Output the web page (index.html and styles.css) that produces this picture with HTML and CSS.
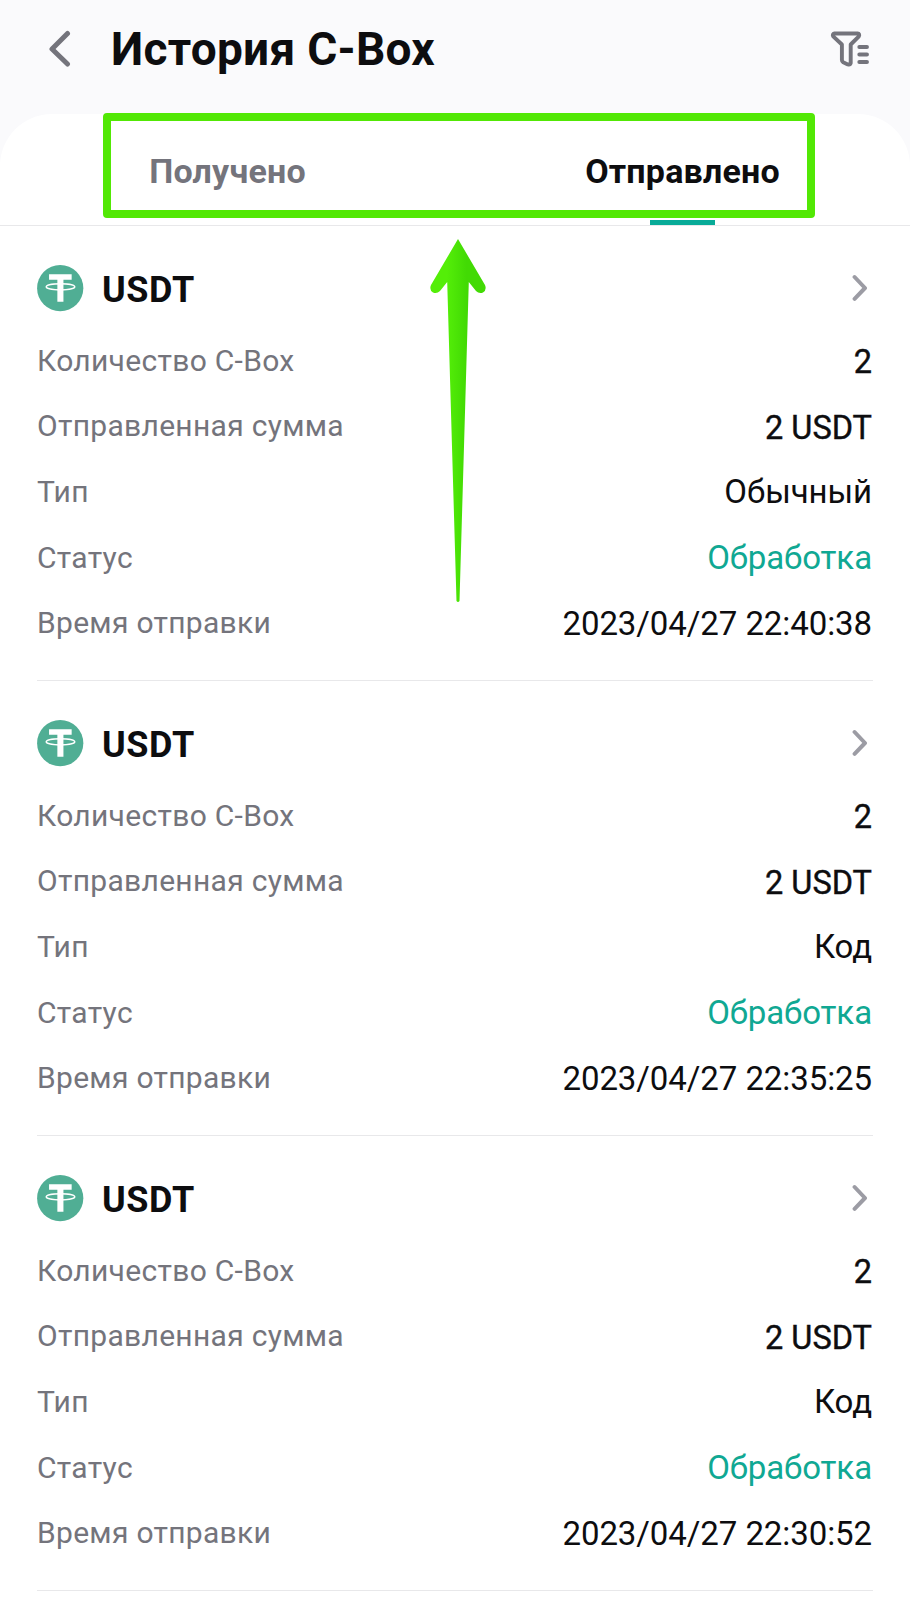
FILE: index.html
```
<!DOCTYPE html>
<html lang="ru">
<head>
<meta charset="utf-8">
<title>История C-Box</title>
<link rel="stylesheet" href="styles.css">
</head>
<body>
<svg class="defs" width="0" height="0" aria-hidden="true">
  <symbol id="tether" viewBox="0 0 48 48">
    <circle cx="23.7" cy="24.2" r="23.6" fill="#50ae94"/>
    <path d="M12.3 10H35.4V15.6H27V38H20.8V15.6H12.3Z" fill="#fff"/>
    <ellipse cx="24" cy="22.8" rx="14.6" ry="3.2" fill="none" stroke="#fff" stroke-width="1.4"/>
  </symbol>
  <symbol id="chevron" viewBox="0 0 16 28">
    <path d="M2.6 3L13 14L2.6 24.8" fill="none" stroke="#9c9ca4" stroke-width="4" stroke-linecap="round" stroke-linejoin="round"/>
  </symbol>
</svg>
<header class="topbar">
  <svg class="back" viewBox="0 0 24 38"><path d="M19.5 3.5L4 19L19.5 34" fill="none" stroke="#74747c" stroke-width="5" stroke-linecap="round" stroke-linejoin="round"/></svg>
  <h1 class="title">История C-Box</h1>
  <svg class="filter" viewBox="0 0 40 38" fill="none" stroke="#74747c" stroke-width="3.9" stroke-linecap="round" stroke-linejoin="round">
    <path d="M4.5 3.5H27.5Q30 3.8 28.9 6.3L20.7 14.5V33Q20.2 35 17.8 34.4L13.2 32.3Q11.9 31.5 11.9 30V14.5L3.2 6.3Q2 4 4.5 3.5Z"/>
    <path d="M29.3 17H37M29.3 24.5H37M29.3 32H37"/>
  </svg>
</header>
<main class="sheet">
  <nav class="tabs">
    <div class="tab">Получено</div>
    <div class="tab active">Отправлено</div>
    <div class="highlight"></div>
  </nav>
  <section class="record">
    <div class="head"><svg class="coin"><use href="#tether"/></svg><h2 class="name">USDT</h2><svg class="more"><use href="#chevron"/></svg></div>
    <div class="row"><span class="label">Количество C-Box</span><span class="value din">2</span></div>
    <div class="row"><span class="label">Отправленная сумма</span><span class="value din">2 USDT</span></div>
    <div class="row"><span class="label">Тип</span><span class="value">Обычный</span></div>
    <div class="row"><span class="label">Статус</span><span class="value status">Обработка</span></div>
    <div class="row"><span class="label">Время отправки</span><span class="value">2023/04/27 22:40:38</span></div>
  </section>
  <section class="record">
    <div class="head"><svg class="coin"><use href="#tether"/></svg><h2 class="name">USDT</h2><svg class="more"><use href="#chevron"/></svg></div>
    <div class="row"><span class="label">Количество C-Box</span><span class="value din">2</span></div>
    <div class="row"><span class="label">Отправленная сумма</span><span class="value din">2 USDT</span></div>
    <div class="row"><span class="label">Тип</span><span class="value">Код</span></div>
    <div class="row"><span class="label">Статус</span><span class="value status">Обработка</span></div>
    <div class="row"><span class="label">Время отправки</span><span class="value">2023/04/27 22:35:25</span></div>
  </section>
  <section class="record">
    <div class="head"><svg class="coin"><use href="#tether"/></svg><h2 class="name">USDT</h2><svg class="more"><use href="#chevron"/></svg></div>
    <div class="row"><span class="label">Количество C-Box</span><span class="value din">2</span></div>
    <div class="row"><span class="label">Отправленная сумма</span><span class="value din">2 USDT</span></div>
    <div class="row"><span class="label">Тип</span><span class="value">Код</span></div>
    <div class="row"><span class="label">Статус</span><span class="value status">Обработка</span></div>
    <div class="row"><span class="label">Время отправки</span><span class="value">2023/04/27 22:30:52</span></div>
  </section>
  <svg class="arrow" viewBox="0 0 60 370">
    <defs><linearGradient id="shade" x1="0" x2="1" y1="0" y2="0"><stop offset=".3" stop-color="#54ee08"/><stop offset=".65" stop-color="#42da04"/></linearGradient></defs>
    <path d="M30 2L57 48Q59 53 55 55.5Q51 57 48 54L40.8 45L31.5 364Q30 366 28.5 364L19.2 45L12 54Q9 57 5 55.5Q1 53 3 48Z" fill="url(#shade)"/>
  </svg>
</main>
</body>
</html>
```
FILE: styles.css
```
* { box-sizing: border-box; }
body {
  margin: 0;
  width: 910px;
  height: 1600px;
  overflow: hidden;
  background: #fafafc;
  color: #0d0d0f;
  font-family: Roboto, "Liberation Sans", sans-serif;
}
.defs { display: block; height: 0; }
.topbar {
  display: flex;
  align-items: center;
  height: 114px;
  padding: 0 40px 16px 48px;
}
.back { width: 24px; height: 38px; }
.title {
  flex: 1;
  margin: 0 0 0 39px;
  font-size: 46px;
  font-weight: 700;
  letter-spacing: .28px;
  line-height: 98px;
  white-space: nowrap;
}
.filter { width: 40px; height: 38px; }
.sheet {
  position: relative;
  height: 1486px;
  background: #fff;
  border-radius: 52px 52px 0 0;
}
.tabs {
  position: relative;
  display: grid;
  grid-template-columns: 1fr 1fr;
  height: 112px;
  border-bottom: 1px solid #e8e8ea;
}
.tab {
  position: relative;
  height: 111px;
  text-align: center;
  font-size: 34px;
  font-weight: 700;
  letter-spacing: .2px;
  line-height: 114px;
  color: #74747c;
}
.active { color: #0d0d0f; }
.active::after {
  content: "";
  position: absolute;
  left: 195px;
  bottom: 0;
  width: 65px;
  height: 5px;
  background: #08ab98;
}
.highlight {
  position: absolute;
  left: 103px;
  top: -1px;
  width: 712px;
  height: 105px;
  border: 8px solid #52e805;
  border-radius: 4px;
}
.record {
  height: 455px;
  margin: 0 37px;
  border-bottom: 1px solid #e8e8ea;
}
.head {
  display: flex;
  align-items: center;
  height: 102px;
  padding: 25px 5px 4px 0;
}
.coin { width: 47px; height: 48px; }
.name {
  flex: 1;
  margin: 0 0 0 18px;
  padding-top: 4px;
  font-size: 36px;
  font-weight: 700;
  letter-spacing: .6px;
  line-height: 42px;
}
.more { width: 16px; height: 28px; }
.row {
  display: flex;
  justify-content: space-between;
  height: 65.7px;
  line-height: 65.7px;
  white-space: nowrap;
}
.label {
  margin-top: -.3px;
  font-size: 30px;
  letter-spacing: .3px;
  color: #74747c;
}
.value {
  padding-right: 1px;
  font-size: 33px;
  letter-spacing: -.08px;
}
.din {
  padding-top: 2px;
  font-size: 32.5px;
  letter-spacing: 0;
  -webkit-text-stroke: .4px #0d0d0f;
}
.status { color: #10a893; }
.arrow {
  position: absolute;
  left: 428px;
  top: 123px;
  width: 60px;
  height: 370px;
}
```
